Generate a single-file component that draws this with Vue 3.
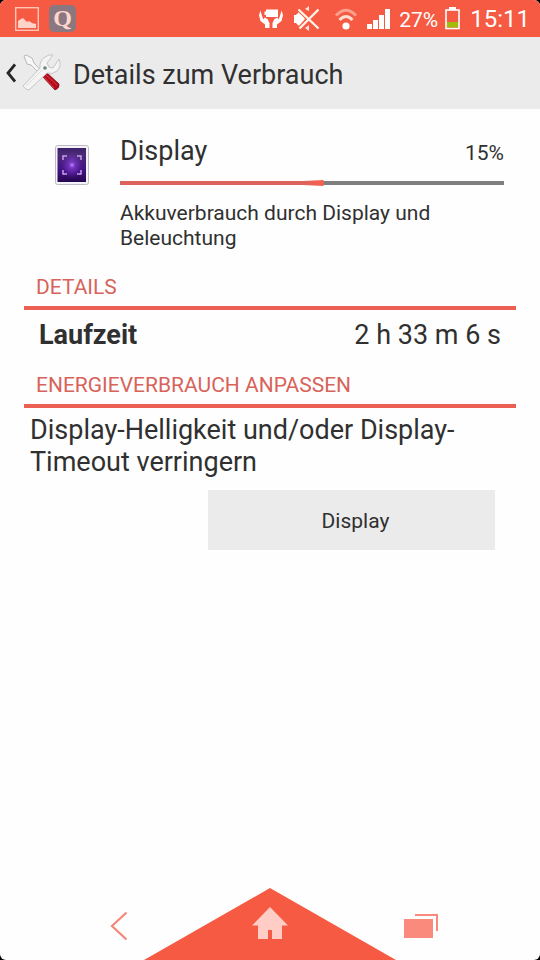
<script setup>
const appName = 'Display'
const usage = 15
const barFill = 53
const runtime = '2 h 33 m 6 s'
</script>

<template>
  <div class="screen">
    <header class="status">
      <div class="status-left">
        <svg width="24" height="24" viewBox="0 0 24 24" aria-hidden="true">
          <rect x="0.7" y="0.7" width="22.6" height="22.6" fill="none" stroke="#ffc4b5" stroke-width="1.4" />
          <path d="M3 21V14l3-2 2-1 4 4 2-1 3 2 4 1v4z" fill="#ffd3c8" />
        </svg>
        <span class="q-badge">Q</span>
      </div>
      <div class="status-right">
        <svg width="26" height="24" viewBox="0 0 26 24" aria-hidden="true">
          <rect x="8" y="2.500" width="12" height="7.500" fill="#fff" />
          <rect x="6.500" y="4.500" width="2" height="3.500" fill="#fff" />
          <path d="M2.500 3.500L1 8l1.500 6 4.500 3.500V21h4.500v-5l-2-4-3-1.500-1 2L4 9z" fill="#fff" />
          <path d="M23.500 3.500L25 8l-1.500 6-4.500 3.500V21h-4.500v-5l2-4 3-1.500 1 2L22 9z" fill="#fff" />
        </svg>
        <svg width="26" height="26" viewBox="0 0 26 26" aria-hidden="true">
          <path d="M11 3l4-3v5zM11 22l4-3v6z" fill="#ffe3dc" />
          <path d="M0 9h2l4-4 5 8-6 7-3-3H0z" fill="#fff" />
          <path d="M4.500 3.500l20 19M24.500 3.500l-19 19" stroke="#f65a43" stroke-width="4" />
          <path d="M4.500 3.500l20 19M24.500 3.500l-19 19" stroke="#fff2e6" stroke-width="2.400" />
        </svg>
        <svg width="27" height="24" viewBox="0 0 27 24" fill="none" aria-hidden="true">
          <path d="M6 8.500q10-10.500 20 0" stroke="#fba28e" stroke-width="3" />
          <path d="M9.500 13q6.500-7 13 0" stroke="#fddfd4" stroke-width="3" />
          <circle cx="16" cy="19" r="3.600" fill="#fff" />
        </svg>
        <svg width="24" height="22" viewBox="0 0 24 22" fill="#fff" aria-hidden="true">
          <rect x="0" y="16" width="5" height="5" />
          <rect x="6" y="12" width="5" height="9" />
          <rect x="12" y="7" width="5" height="14" />
          <rect x="18" y="1" width="5" height="20" />
        </svg>
        <span class="battery-text">27%</span>
        <svg width="15" height="24" viewBox="0 0 15 24" aria-hidden="true">
          <rect x="4" y="0" width="7" height="3" fill="#fff" />
          <rect x="1" y="3" width="13" height="18.500" fill="#f65a43" stroke="#fff" stroke-width="1.600" />
          <rect x="2" y="15" width="11" height="5.500" fill="#a0bd0c" />
        </svg>
        <time class="clock">15:11</time>
      </div>
    </header>

    <nav class="action-bar">
      <button class="up" type="button" aria-label="Zurück">
        <svg width="10" height="20" viewBox="0 0 10 20" aria-hidden="true">
          <path d="M9 1.500L2 10l7 8.500" fill="none" stroke="#262626" stroke-width="2.800" />
        </svg>
        <svg width="40" height="40" viewBox="0 0 40 40" aria-hidden="true">
          <path d="M2 3l2-1 6 3 2 5 11 12-2 2L9 12l-4-1z" fill="#f7f7f7" stroke="#a9a9a9" stroke-width="0.800" />
          <path d="M20 23l4-4 13 12q1 4-4 6z" fill="#b80b1c" stroke="#80101a" stroke-width="0.800" />
          <path d="M24 22l11 10M22 24l10 11" stroke="#d8434c" stroke-width="0.900" />
          <path d="M1 33l17-18q-1-7 5-11 4-3 8-2l-6 8 2 4 4 1 6-9q3 7-2 12-5 4-10 2L7 37q-3 0-6-4z" fill="#f4f4f4" stroke="#c0c0c0" stroke-width="0.900" />
          <path d="M4 33l16-16" stroke="#dedede" />
          <circle cx="23" cy="15" r="1.800" fill="#687" />
        </svg>
      </button>
      <h1>Details zum Verbrauch</h1>
    </nav>

    <main>
      <section class="summary">
        <svg class="app-icon" width="36" height="42" viewBox="0 0 36 42" aria-hidden="true">
          <defs>
            <linearGradient id="panel" x1="0" y1="0" x2="0" y2="1">
              <stop offset="0" stop-color="#3c2169" />
              <stop offset="0.200" stop-color="#4b2c76" />
              <stop offset="0.650" stop-color="#441184" />
              <stop offset="1" stop-color="#25074f" />
            </linearGradient>
            <radialGradient id="glow">
              <stop offset="0" stop-color="#8d48d8" />
              <stop offset="1" stop-color="#6d2bc0" stop-opacity="0" />
            </radialGradient>
          </defs>
          <rect x="1.500" y="1.500" width="33" height="39" rx="2" fill="#f5f3fa" stroke="#bdbac6" />
          <rect x="3.500" y="4" width="28.500" height="34" fill="url(#panel)" />
          <ellipse cx="18" cy="21" rx="11" ry="13" fill="url(#glow)" />
          <path d="M9 16v-4h4M23 12h4v4M27 26v4h-4M13 30H9v-4" fill="none" stroke="#c9a1ec" stroke-width="1.500" />
          <circle cx="18" cy="21" r="2" fill="#a66aef" />
        </svg>
        <div class="summary-body">
          <div class="summary-head">
            <h2>{{ appName }}</h2>
            <span class="percent">{{ usage }}%</span>
          </div>
          <div class="bar"><div class="fill" :style="{ width: barFill + '%' }"></div></div>
          <p class="description">Akkuverbrauch durch Display und Beleuchtung</p>
        </div>
      </section>

      <section class="group">
        <h3>DETAILS</h3>
        <dl class="row">
          <dt>Laufzeit</dt>
          <dd>{{ runtime }}</dd>
        </dl>
      </section>

      <section class="group">
        <h3>ENERGIEVERBRAUCH ANPASSEN</h3>
        <p class="hint">Display-Helligkeit und/oder Display-Timeout verringern</p>
        <button class="action" type="button">Display</button>
      </section>
    </main>

    <footer class="nav-bar">
      <button type="button" aria-label="Zurück">
        <svg width="18" height="30" viewBox="0 0 18 30" aria-hidden="true">
          <path d="M16.500 1.500L2 15l14.500 13.500" fill="none" stroke="#f4877a" stroke-width="2.200" />
        </svg>
      </button>
      <button class="home" type="button" aria-label="Startbildschirm">
        <svg width="252" height="72" viewBox="0 0 252 72" aria-hidden="true">
          <path d="M126 0l126 72H0z" fill="#f65a43" />
          <path d="M126 19l18 18.500h-6V51h-10v-9h-4v9h-10V37.500h-6z" fill="#ffcdc6" />
        </svg>
      </button>
      <button type="button" aria-label="Letzte Apps">
        <svg width="34" height="24" viewBox="0 0 34 24" aria-hidden="true">
          <rect x="0" y="5" width="29" height="19" fill="#fa8a7b" />
          <path d="M11 1h22v16" fill="none" stroke="#f78a7c" stroke-width="2" />
        </svg>
      </button>
    </footer>
  </div>
</template>

<style>
body {
  margin: 0;
  background: #000;
}
</style>

<style scoped>
.screen {
  display: flex;
  flex-direction: column;
  min-height: 100vh;
  overflow: hidden;
  border-radius: 6px;
  background: #fefefe;
  color: #303030;
  font-family: Roboto, "Liberation Sans", sans-serif;
}
h1, h2, h3, p, dl, dd {
  margin: 0;
  font-weight: 400;
}
button {
  padding: 0;
  border: 0;
  background: none;
  color: inherit;
  font-family: inherit;
}
svg {
  display: block;
  flex: none;
}
.status {
  display: flex;
  justify-content: space-between;
  height: 37px;
  padding: 0 10px 0 15px;
  background: #f65a43;
  color: #fff;
}
.status-left, .status-right {
  display: flex;
  align-items: center;
  gap: 10px;
}
.q-badge {
  width: 27px;
  border-radius: 5px;
  background: #8b7780;
  color: #ffd6cc;
  font: bold 24px/27px "Liberation Serif", serif;
  text-align: center;
}
.battery-text {
  margin: 0 -3px 0 -2px;
  padding-top: 2px;
  font-size: 21px;
}
.clock {
  font-size: 24px;
}
.action-bar {
  display: flex;
  align-items: center;
  height: 72px;
  background: #ebebeb;
}
.up {
  display: flex;
  align-items: center;
  gap: 6px;
  padding: 0 11px 0 6px;
}
h1 {
  padding-top: 4px;
  font-size: 27px;
  line-height: 32px;
}
main {
  padding: 24px 24px 0;
}
.summary {
  display: flex;
  gap: 30px;
  padding: 0 12px 0 30px;
}
.app-icon {
  margin-top: 11px;
}
.summary-body {
  flex: 1;
}
.summary-head {
  display: flex;
  align-items: center;
  justify-content: space-between;
  height: 48px;
}
h2 {
  padding-bottom: 12px;
  font-size: 27px;
  line-height: 36px;
}
.percent {
  padding-bottom: 8px;
  font-size: 21px;
  line-height: 24px;
}
.bar {
  height: 4px;
  background: #7f7f7f;
}
.fill {
  position: relative;
  height: 100%;
  background: #dd635a;
}
.fill::after {
  content: "";
  position: absolute;
  right: 0;
  top: -1px;
  width: 20px;
  height: 6px;
  background: linear-gradient(90deg, #dd635a, #f9604d);
  clip-path: polygon(0 1px, 100% 0, 100% 100%, 0 5px);
}
.description {
  padding: 16px 0 23px;
  font-size: 21px;
  line-height: 25px;
}
h3 {
  padding: 0 12px 6px;
  border-bottom: 4px solid #eb6053;
  color: #d8635a;
  font-size: 21px;
  line-height: 26px;
}
.row {
  display: flex;
  justify-content: space-between;
  padding: 8px 15px 20px;
  font-size: 27px;
  line-height: 34px;
}
dt {
  font-weight: 700;
}
.hint {
  padding: 6px 6px 12px;
  font-size: 27px;
  line-height: 32px;
}
.action {
  display: block;
  width: 58%;
  min-width: 287px;
  height: 60px;
  margin: 0 21px 0 auto;
  padding: 2px 0 0 8px;
  background: #ebebeb;
  font-size: 21px;
}
.nav-bar {
  display: flex;
  align-items: center;
  justify-content: center;
  height: 72px;
  margin-top: auto;
}
.nav-bar > button:not(.home) {
  display: flex;
  justify-content: center;
  width: 50px;
  padding-top: 4px;
}
</style>
